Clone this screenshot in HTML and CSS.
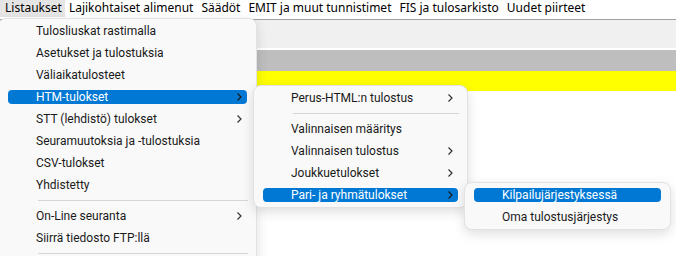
FILE: index.html
```html
<!DOCTYPE html>
<html lang="fi">
<head>
  <meta charset="UTF-8" />
  <title>Listaukset</title>
  <link rel="stylesheet" href="styles.css">
</head>
<body>

  <!-- Menu bar -->
  <div class="menubar">
    <span class="menubar-item open">Listaukset</span>
    <span class="menubar-item">Lajikohtaiset alimenut</span>
    <span class="menubar-item">Säädöt</span>
    <span class="menubar-item">EMIT ja muut tunnistimet</span>
    <span class="menubar-item">FIS ja tulosarkisto</span>
    <span class="menubar-item">Uudet piirteet</span>
  </div>

  <!-- Window content behind the menus -->
  <div class="content">
    <div class="band band-light"></div>
    <div class="band band-gray"></div>
    <div class="band band-yellow"></div>
  </div>

  <!-- Main dropdown -->
  <div class="menu menu-main">
    <div class="item">Tulosliuskat rastimalla</div>
    <div class="item">Asetukset ja tulostuksia</div>
    <div class="item">Väliaikatulosteet</div>
    <div class="item active">HTM-tulokset
      <svg class="chev" width="6" height="8" viewBox="0 0 6 8"><polyline points="1.5,0.5 5,4 1.5,7.5" /></svg>
    </div>
    <div class="item">STT (lehdistö) tulokset
      <svg class="chev" width="6" height="8" viewBox="0 0 6 8"><polyline points="1.5,0.5 5,4 1.5,7.5" /></svg>
    </div>
    <div class="item">Seuramuutoksia ja -tulostuksia</div>
    <div class="item">CSV-tulokset</div>
    <div class="item">Yhdistetty</div>
    <div class="sep"></div>
    <div class="item">On-Line seuranta
      <svg class="chev" width="6" height="8" viewBox="0 0 6 8"><polyline points="1.5,0.5 5,4 1.5,7.5" /></svg>
    </div>
    <div class="item">Siirrä tiedosto FTP:llä</div>
    <div class="sep"></div>
  </div>

  <!-- HTM-tulokset submenu -->
  <div class="menu menu-htm">
    <div class="item">Perus-HTML:n tulostus
      <svg class="chev" width="6" height="8" viewBox="0 0 6 8"><polyline points="1.5,0.5 5,4 1.5,7.5" /></svg>
    </div>
    <div class="sep"></div>
    <div class="item">Valinnaisen määritys</div>
    <div class="item">Valinnaisen tulostus
      <svg class="chev" width="6" height="8" viewBox="0 0 6 8"><polyline points="1.5,0.5 5,4 1.5,7.5" /></svg>
    </div>
    <div class="item">Joukkuetulokset
      <svg class="chev" width="6" height="8" viewBox="0 0 6 8"><polyline points="1.5,0.5 5,4 1.5,7.5" /></svg>
    </div>
    <div class="item active">Pari- ja ryhmätulokset
      <svg class="chev" width="6" height="8" viewBox="0 0 6 8"><polyline points="1.5,0.5 5,4 1.5,7.5" /></svg>
    </div>
  </div>

  <!-- Pari- ja ryhmätulokset submenu -->
  <div class="menu menu-pari">
    <div class="item active">Kilpailujärjestyksessä</div>
    <div class="item">Oma tulostusjärjestys</div>
  </div>

</body>
</html>
```

FILE: styles.css
```css
body {
  margin: 0;
  width: 676px;
  height: 256px;
  overflow: hidden;
  position: relative;
  background: #fff;
  font-family: Roboto, "Noto Sans", sans-serif;
  font-size: 12px;
  color: #000;
}

.menubar {
  display: flex;
  height: 19px;
  background: #fff;
  border-bottom: 1px solid #a0a0a0;
  font-family: "Noto Sans", Roboto, sans-serif;
}

.menubar-item {
  padding: 0 4px;
  height: 17px;
  line-height: 16px;
  white-space: nowrap;
}

.menubar-item:first-child {
  padding-left: 5px;
  padding-right: 3px;
}

.menubar-item.open {
  background: #e5e5e5;
}

.content {
  display: flex;
  flex-direction: column;
}

.band-light {
  height: 28px;
  background: #f0f0f0;
  border-bottom: 2px solid #fff;
}

.band-gray {
  height: 21px;
  background: #bebebe;
}

.band-yellow {
  height: 20px;
  background: #ffff00;
}

/* dropdown menus */
.menu {
  position: absolute;
  display: flex;
  flex-direction: column;
  box-sizing: border-box;
  padding: 1px 0;
  background: #f9f9f9;
  border: 1px solid #e2e2e2;
  border-radius: 8px;
  box-shadow: 0 4px 12px rgba(0, 0, 0, 0.13);
  color: #1a1a1a;
}

.menu-main {
  left: -2px;
  top: 18px;
  width: 259px;
  height: 250px;
}

.menu-htm {
  left: 253px;
  top: 85px;
  width: 215px;
}

.menu-pari {
  left: 464px;
  top: 182px;
  width: 207px;
}

.item {
  position: relative;
  display: flex;
  align-items: center;
  height: 14px;
  margin: 4px 9px;
  padding-left: 28px;
  border-radius: 4px;
  white-space: nowrap;
}

.item.active {
  background: #0078d4;
  color: #fff;
}

.chev {
  position: absolute;
  right: 5px;
  top: 3px;
  fill: none;
  stroke: #333;
  stroke-width: 1.2;
}

.item.active .chev {
  stroke: #1a1a1a;
}

.sep {
  height: 1px;
  margin: 4px 8px 4px 39px;
  background: #d6d6d6;
}
```
